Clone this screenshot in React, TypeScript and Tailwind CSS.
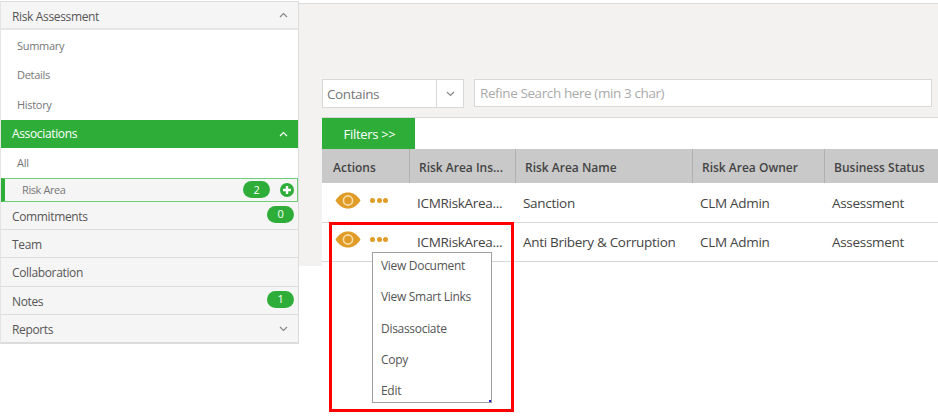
import React from 'react';

const font = 'font-["Open_Sans","Noto_Sans",sans-serif]';

const Chevron = ({ dir, className }: { dir: 'up' | 'down'; className: string }) => (
  <svg width="9" height="6" viewBox="0 0 9 6" fill="none" stroke="currentColor" strokeWidth="1.2" className={className}>
    <path d={dir === 'up' ? 'M1 5l3.5-3.5L8 5' : 'M1 1l3.5 3.5L8 1'} />
  </svg>
);

const Badge = ({ value, className = '' }: { value: number; className?: string }) => (
  <span className={`flex h-[17px] w-[27px] items-center justify-center rounded-full bg-[#2eae39] text-[11px] text-white ${className}`}>{value}</span>
);

const Eye = () => (
  <svg width="26" height="17" viewBox="0 0 26 17">
    <path d="M0.5 8.5C4 3 8 0.5 13 0.5s9 2.5 12.500 8c-3.500 5.500-7.500 8-12.500 8s-9-2.500-12.500-8z" fill="#e09c26" />
    <circle cx="13" cy="8.500" r="4.600" fill="none" stroke="#f6dca8" strokeWidth="1.600" />
  </svg>
);

const Dots = () => (
  <span className="flex gap-[1.500px]">
    <span className="h-[5px] w-[5px] rounded-full bg-[#e09c26]" />
    <span className="h-[5px] w-[5px] rounded-full bg-[#e09c26]" />
    <span className="h-[5px] w-[5px] rounded-full bg-[#e09c26]" />
  </span>
);

const SubItem = ({ label }: { label: string }) => (
  <div className="flex h-[29.500px] items-center pl-4 pt-[2px] text-[11px] tracking-[-0.3px] text-[#777]">{label}</div>
);

const NavRow = ({ label, badge, chevron }: { label: string; badge?: number; chevron?: boolean }) => (
  <div className="flex h-[28.200px] items-center justify-between border-b border-[#dcdcdc] bg-[#f5f5f5] pl-[11px] pr-[4px] text-[12px] tracking-[-0.35px] text-[#555]">
    <span className="pt-[3px]">{label}</span>
    {badge !== undefined && <Badge value={badge} className="mt-[-2px]" />}
    {chevron && <Chevron dir="down" className="mr-[6px] mt-[2px] text-[#888]" />}
  </div>
);

const Row = ({ name, tall }: { name: string; tall?: boolean }) => (
  <div className={`flex border-b border-[#d8d8d8] bg-white text-[13.500px] tracking-[-0.3px] text-[#444] ${tall ? 'h-[40px]' : 'h-[39px]'}`}>
    <div className={`flex w-[88px] items-start gap-[9px] pl-[13px] ${tall ? 'pt-[9px]' : 'pt-[8px]'}`}>
      <Eye />
      <div className="pt-[6px]"><Dots /></div>
    </div>
    <div className="flex w-[106px] items-center pl-[7px] pt-px">ICMRiskArea...</div>
    <div className="flex w-[177px] items-center pl-[7px] pt-px">{name}</div>
    <div className="flex w-[132px] items-center pl-[7px] pt-px">CLM Admin</div>
    <div className="flex flex-1 items-center pl-[7px] pt-px">Assessment</div>
  </div>
);

const headers = [
  { label: 'Actions', w: 'w-[88px] pl-[11px]' },
  { label: 'Risk Area Ins...', w: 'w-[106px] pl-[9px]' },
  { label: 'Risk Area Name', w: 'w-[177px] pl-[9px]' },
  { label: 'Risk Area Owner', w: 'w-[132px] pl-[9px]' },
  { label: 'Business Status', w: 'flex-1 pl-[9px]' },
];

export default function App() {
  return (
    <div className={`relative flex h-[417px] w-[938px] overflow-hidden bg-white ${font}`}>
      {/* left nav */}
      <aside className="mt-px h-[343px] w-[299px] shrink-0 border border-[#dcdcdc] border-l-[#e4e4e4]">
        <div className="flex h-[28px] items-center justify-between border-b-2 border-[#e6e6e6] bg-[#f5f5f5] pl-[11px] pr-[10px] text-[12px] tracking-[-0.35px] text-[#555]">
          <span className="pt-[3px]">Risk Assessment</span>
          <Chevron dir="up" className="text-[#888]" />
        </div>
        <div className="bg-white pb-px">
          <SubItem label="Summary" />
          <SubItem label="Details" />
          <SubItem label="History" />
        </div>
        <div className="flex h-[28px] items-center justify-between bg-[#2eae39] pl-[11px] pr-[10px] text-[12px] tracking-[-0.35px] text-white">
          <span className="pt-px">Associations</span>
          <Chevron dir="up" className="text-white" />
        </div>
        <div className="flex h-[30px] items-center pl-4 pt-px text-[11px] tracking-[-0.3px] text-[#777]">All</div>
        <div className="flex h-[24.500px] items-center border border-l-4 border-[#6fcf78] border-l-[#2eae39] bg-[#f5f5f5] pl-[17px] pr-[3px] text-[11px] tracking-[-0.4px] text-[#777]">
          <span className="flex-1">Risk Area</span>
          <Badge value={2} className="mr-[10px]" />
          <svg width="14" height="14" viewBox="0 0 14 14">
            <circle cx="7" cy="7" r="7" fill="#2eae39" />
            <path d="M7 3v8M3 7h8" stroke="#fff" strokeWidth="2.400" />
          </svg>
        </div>
        <NavRow label="Commitments" badge={0} />
        <NavRow label="Team" />
        <NavRow label="Collaboration" />
        <NavRow label="Notes" badge={1} />
        <NavRow label="Reports" chevron />
      </aside>

      {/* right side */}
      <main className="mt-[3px] flex h-[263px] flex-1 flex-col border-t border-[#dcdcdc] bg-[#f3f2f1]">
        <div className="flex h-[113px] gap-[10px] pl-[23px] pr-[6px] pt-[75px]">
          <div className="flex h-[29px] w-[142px] border border-[#d8d8d8] bg-white text-[13.500px] tracking-[-0.4px] text-[#777]">
            <span className="flex-1 pl-[4px] pt-px leading-[27px]">Contains</span>
            <span className="flex w-[27px] items-center justify-center border-l border-[#d8d8d8]">
              <Chevron dir="down" className="text-[#888]" />
            </span>
          </div>
          <div className="flex h-[28px] flex-1 items-center border border-[#d8d8d8] bg-white pl-[5px] pt-px text-[13.500px] tracking-[-0.4px] text-[#aaa]">
            Refine Search here (min 3 char)
          </div>
        </div>
        <div className="ml-[23px] flex-1 bg-white">
          <div className="border-t border-[#d8d8d8]">
            <div className="flex h-[31px] w-[93px] items-center justify-center bg-[#2eae39] pl-[2px] pt-[2px] text-[13px] tracking-[-0.3px] text-white">Filters &gt;&gt;</div>
          </div>
          <div className="flex h-[34px] bg-[#c9c9c9] text-[12px] font-semibold text-[#444]">
            {headers.map((h) => (
              <div key={h.label} className={`flex items-center border-r border-[#b0b0b0] pt-[3px] last:border-r-0 ${h.w}`}>
                {h.label}
              </div>
            ))}
          </div>
          <Row name="Sanction" tall />
          <Row name="Anti Bribery & Corruption" />
        </div>
      </main>

      {/* action menu popup */}
      <div className="absolute left-[372px] top-[252px] h-[151px] w-[120px] border border-[#a0a0a0] bg-white pl-2 text-[12px] tracking-[-0.3px] text-[#555]">
        {['View Document', 'View Smart Links', 'Disassociate', 'Copy', 'Edit'].map((item) => (
          <div key={item} className="flex h-[31.300px] items-center pb-[5px]">{item}</div>
        ))}
        <span className="absolute bottom-0 right-0 h-[2px] w-[2px] bg-[#2222cc]" />
      </div>

      {/* red callout on the screenshot */}
      <div className="pointer-events-none absolute left-[329px] top-[222px] h-[190px] w-[185px] border-[3px] border-[#ff0000]" />
    </div>
  );
}
